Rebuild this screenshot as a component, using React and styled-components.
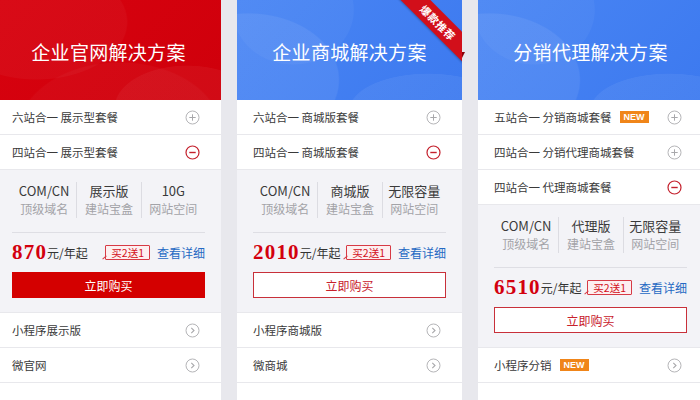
import React from "react";
import styled, { createGlobalStyle, css } from "styled-components";

const GlobalStyle = createGlobalStyle`
  html, body { margin: 0; padding: 0; }
  body {
    background: #e8e8ed;
    font-family: "Noto Sans CJK SC", "Noto Sans", "Liberation Sans", sans-serif;
    color: #333;
    overflow: hidden;
  }
`;

const Page = styled.div`
  display: grid;
  grid-template-columns: repeat(3, 225px);
  gap: 16px;
  margin-left: -4px;
  height: 400px;
  overflow: hidden;
  align-items: start;
`;

const Card = styled.div`
  background: #fff;
  display: flex;
  flex-direction: column;
  height: 400px;
  position: relative;
`;

const themes = {
  red: css`
    background:
      radial-gradient(ellipse 150px 95px at 18% 22%, rgba(255,255,255,0.035) 0 60%, transparent 61%),
      radial-gradient(ellipse 120px 70px at 85% 108%, rgba(255,255,255,0.045) 0 60%, transparent 61%),
      radial-gradient(ellipse 170px 120px at 55% 135%, rgba(255,255,255,0.03) 0 60%, transparent 61%),
      linear-gradient(135deg, #d8020f 0%, #cf000b 100%);
  `,
  blue: css`
    background:
      radial-gradient(ellipse 150px 110px at 5% 80%, rgba(255,255,255,0.07) 0 60%, transparent 61%),
      radial-gradient(ellipse 130px 60px at 85% 110%, rgba(255,255,255,0.06) 0 60%, transparent 61%),
      radial-gradient(ellipse 100px 90px at 25% 10%, rgba(255,255,255,0.04) 0 60%, transparent 61%),
      linear-gradient(135deg, #4a86f4 0%, #3c79ef 100%);
  `,
};

const Header = styled.div`
  position: relative;
  height: 100px;
  flex: none;
  display: flex;
  align-items: center;
  justify-content: center;
  ${(p) => themes[p.$theme]}
`;

const Title = styled.h2`
  margin: 0;
  color: #fff;
  font-size: 19px;
  font-weight: 400;
  letter-spacing: 0.3px;
  padding-top: 2px;
`;

const RibbonClip = styled.div`
  position: absolute;
  top: 0;
  right: 0;
  width: 66px;
  height: 66px;
  overflow: hidden;
`;

const RibbonBand = styled.div`
  position: absolute;
  left: -12px;
  top: 12px;
  width: 108px;
  height: 21px;
  background: #d20f1a;
  transform: rotate(45deg);
  color: #fff;
  font-size: 10.5px;
  font-weight: 700;
  line-height: 21px;
  text-align: center;
  letter-spacing: 0.6px;
  box-shadow: 0 1px 2px rgba(0,0,0,0.25);
`;

const RibbonFold = styled.div`
  position: absolute;
  right: -3px;
  top: 52px;
  width: 0;
  height: 0;
  border-left: 3px solid #8a0008;
  border-bottom: 6px solid transparent;
`;

const Row = styled.div`
  height: 35px;
  box-sizing: border-box;
  flex: none;
  display: flex;
  align-items: center;
  padding: 0 21px 0 16px;
  border-bottom: 1px solid #e8e8ec;
  font-size: 11.5px;
  color: #3a3a3a;
`;

const RowLabel = styled.span`
  flex: 1;
  display: flex;
  align-items: center;
  gap: 8px;
  white-space: nowrap;
`;

const NewBadge = styled.span`
  background: #f08519;
  color: #fff;
  font-family: "Liberation Sans", sans-serif;
  font-weight: 700;
  font-size: 9px;
  line-height: 12px;
  padding: 0 4px;
`;

const Detail = styled.div`
  background: #f3f3f7;
  padding: 12px 16px 14px;
  border-bottom: 1px solid #e8e8ec;
  flex: none;
`;

const Specs = styled.div`
  display: grid;
  grid-template-columns: repeat(3, 1fr);
  padding-bottom: 14px;
  border-bottom: 1px solid #dedee4;
`;

const Spec = styled.div`
  text-align: center;
  & + & { border-left: 1px solid #dcdce2; }
`;

const SpecValue = styled.div`
  font-size: 13px;
  line-height: 18px;
  color: #3a3a3a;
`;

const SpecLabel = styled.div`
  font-size: 12px;
  line-height: 18px;
  color: #a3a3a8;
`;

const PriceRow = styled.div`
  height: 39px;
  display: flex;
  align-items: center;
  white-space: nowrap;
`;

const Amount = styled.span`
  font-family: "Liberation Serif", serif;
  font-weight: 700;
  font-size: 21px;
  letter-spacing: 1.2px;
  color: #d3000e;
  line-height: 1;
`;

const Unit = styled.span`
  font-size: 12px;
  color: #333;
`;

const Promo = styled.span`
  position: relative;
  margin-left: auto;
  border: 1px solid #d73a45;
  background: #fdeff0;
  color: #d3101b;
  font-size: 10.5px;
  line-height: 13px;
  padding: 0 5px;
  border-radius: 1px;
  &::before {
    content: "";
    position: absolute;
    left: -4px;
    bottom: 1px;
    width: 5px;
    height: 0;
    border-top: 1px solid #d73a45;
    transform: rotate(-40deg);
  }
`;

const DetailLink = styled.a`
  margin-left: 7px;
  color: #2569c3;
  font-size: 12px;
  text-decoration: none;
`;

const BuyButton = styled.button`
  display: block;
  width: 100%;
  height: 26px;
  font-family: inherit;
  font-size: 12px;
  cursor: pointer;
  ${(p) =>
    p.$filled
      ? css`
          background: #d40000;
          color: #fff;
          border: none;
        `
      : css`
          background: #fff;
          color: #c8202c;
          border: 1px solid #c8303a;
        `}
`;

const PlusIcon = () => (
  <svg width="15" height="15" viewBox="0 0 15 15">
    <circle cx="7.5" cy="7.5" r="6.5" fill="none" stroke="#b5b5b8" strokeWidth="1" />
    <path d="M4.3 7.5h6.4M7.5 4.3v6.4" stroke="#a8a8ab" strokeWidth="1" />
  </svg>
);

const MinusIcon = () => (
  <svg width="15" height="15" viewBox="0 0 15 15">
    <circle cx="7.5" cy="7.5" r="6.5" fill="none" stroke="#c4202c" strokeWidth="1.2" />
    <path d="M4.3 7.5h6.4" stroke="#c4202c" strokeWidth="1.4" />
  </svg>
);

const ChevronIcon = () => (
  <svg width="15" height="15" viewBox="0 0 15 15">
    <circle cx="7.5" cy="7.5" r="6.5" fill="none" stroke="#b5b5b8" strokeWidth="1" />
    <path d="M6.3 4.9l2.7 2.6-2.7 2.6" fill="none" stroke="#a8a8ab" strokeWidth="1.1" />
  </svg>
);

const icons = { plus: PlusIcon, minus: MinusIcon, chevron: ChevronIcon };

const ListRow = ({ label, icon, isNew }) => {
  const Icon = icons[icon];
  return (
    <Row>
      <RowLabel>
        {label}
        {isNew && <NewBadge>NEW</NewBadge>}
      </RowLabel>
      {Icon && <Icon />}
    </Row>
  );
};

const Expanded = ({ specs, price, filled }) => (
  <Detail>
    <Specs>
      {specs.map(([v, l]) => (
        <Spec key={l}>
          <SpecValue>{v}</SpecValue>
          <SpecLabel>{l}</SpecLabel>
        </Spec>
      ))}
    </Specs>
    <PriceRow>
      <Amount>{price}</Amount>
      <Unit>元/年起</Unit>
      <Promo>买2送1</Promo>
      <DetailLink href="#">查看详细</DetailLink>
    </PriceRow>
    <BuyButton $filled={filled}>立即购买</BuyButton>
  </Detail>
);

const cards = [
  {
    theme: "red",
    title: "企业官网解决方案",
    before: [{ label: "六站合一 展示型套餐", icon: "plus" }, { label: "四站合一 展示型套餐", icon: "minus" }],
    specs: [["COM/CN", "顶级域名"], ["展示版", "建站宝盒"], ["10G", "网站空间"]],
    price: "870",
    filled: true,
    after: [{ label: "小程序展示版", icon: "chevron" }, { label: "微官网", icon: "chevron" }, { label: "", icon: null }],
  },
  {
    theme: "blue",
    title: "企业商城解决方案",
    ribbon: "爆款推荐",
    before: [{ label: "六站合一 商城版套餐", icon: "plus" }, { label: "四站合一 商城版套餐", icon: "minus" }],
    specs: [["COM/CN", "顶级域名"], ["商城版", "建站宝盒"], ["无限容量", "网站空间"]],
    price: "2010",
    after: [{ label: "小程序商城版", icon: "chevron" }, { label: "微商城", icon: "chevron" }, { label: "", icon: null }],
  },
  {
    theme: "blue",
    title: "分销代理解决方案",
    before: [
      { label: "五站合一 分销商城套餐", icon: "plus", isNew: true },
      { label: "四站合一 分销代理商城套餐", icon: "plus" },
      { label: "四站合一 代理商城套餐", icon: "minus" },
    ],
    specs: [["COM/CN", "顶级域名"], ["代理版", "建站宝盒"], ["无限容量", "网站空间"]],
    price: "6510",
    after: [{ label: "小程序分销", icon: "chevron", isNew: true }, { label: "", icon: null }],
  },
];

export default function App() {
  return (
    <>
      <GlobalStyle />
      <Page>
        {cards.map((c) => (
          <Card key={c.title}>
            <Header $theme={c.theme}>
              <Title>{c.title}</Title>
              {c.ribbon && (
                <RibbonClip>
                  <RibbonBand>{c.ribbon}</RibbonBand>
                </RibbonClip>
              )}
            </Header>
            {c.ribbon && <RibbonFold />}
            {c.before.map((r, i) => (
              <ListRow key={i} {...r} />
            ))}
            <Expanded specs={c.specs} price={c.price} filled={c.filled} />
            {c.after.map((r, i) => (
              <ListRow key={"a" + i} {...r} />
            ))}
          </Card>
        ))}
      </Page>
    </>
  );
}
